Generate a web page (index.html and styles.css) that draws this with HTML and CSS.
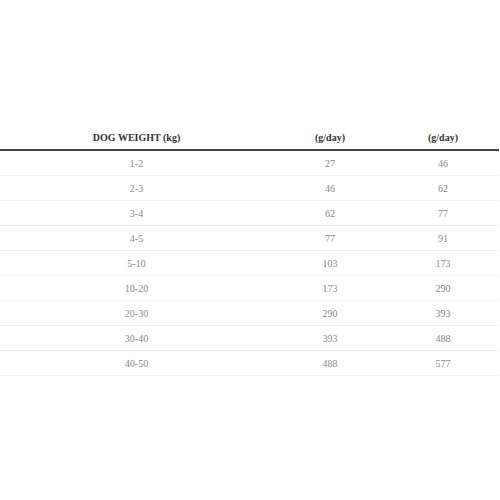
FILE: index.html
```html
<!DOCTYPE html>
<html>
<head>
<meta charset="utf-8">
<link rel="stylesheet" href="styles.css">
</head>
<body>
<div class="wrap">
<table class="feed">
<colgroup><col class="c1"><col class="c2"><col class="c3"></colgroup>
<thead>
<tr><th>DOG WEIGHT (kg)</th><th>(g/day)</th><th>(g/day)</th></tr>
</thead>
<tbody>
<tr><td>1-2</td><td>27</td><td>46</td></tr>
<tr><td>2-3</td><td>46</td><td>62</td></tr>
<tr><td>3-4</td><td>62</td><td>77</td></tr>
<tr><td>4-5</td><td>77</td><td>91</td></tr>
<tr><td>5-10</td><td>103</td><td>173</td></tr>
<tr><td>10-20</td><td>173</td><td>290</td></tr>
<tr><td>20-30</td><td>290</td><td>393</td></tr>
<tr><td>30-40</td><td>393</td><td>488</td></tr>
<tr><td>40-50</td><td>488</td><td>577</td></tr>
</tbody>
</table>
</div>
</body>
</html>
```
FILE: styles.css
```css
html, body {
  margin: 0;
  padding: 0;
  background: #fff;
}
.wrap {
  padding-top: 126px;
  width: 499px;
}
.feed {
  width: 100%;
  border-collapse: collapse;
  table-layout: fixed;
  font-family: "Liberation Serif", "Times New Roman", serif;
  font-size: 10px;
}
.c1 { width: 273px; }
.c2 { width: 114px; }
.c3 { width: 112px; }
.feed th {
  height: 23px;
  padding: 0;
  font-weight: bold;
  color: #333;
  text-align: center;
  vertical-align: middle;
  border-bottom: 2px solid #444;
}
.feed td {
  height: 24px;
  padding: 0;
  color: #888;
  text-align: center;
  vertical-align: middle;
  border-bottom: 1px solid #efefef;
}
```
